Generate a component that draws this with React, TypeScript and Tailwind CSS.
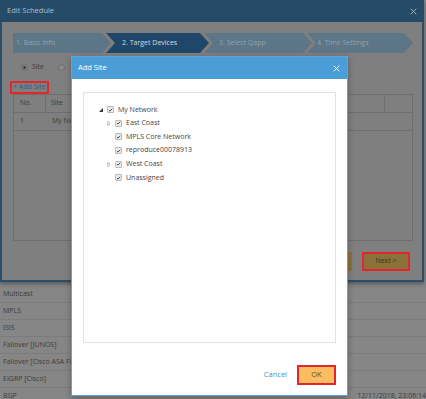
import * as React from "react";

const PAGE_ROWS = [
  "Multicast",
  "MPLS",
  "ISIS",
  "Failover [JUNOS]",
  "Failover [Cisco ASA Firewall]",
  "EIGRP [Cisco]",
  "BGP",
];

const STEPS = [
  { label: "1. Basic Info", cls: "w-[98px] pl-[3px] bg-[#5c7687] text-[#8fa3b0] [clip-path:polygon(0_0,calc(100%-9px)_0,100%_50%,calc(100%-9px)_100%,0_100%)]" },
  { label: "2. Target Devices", cls: "-ml-[5px] w-[103px] pl-[16px] bg-[#1f476a] text-[#d3dce4] [clip-path:polygon(0_0,calc(100%-9px)_0,100%_50%,calc(100%-9px)_100%,0_100%,9px_50%)]" },
  { label: "3. Select Qapp", cls: "-ml-[5px] w-[108px] pl-[15px] bg-[#5c7687] text-[#8fa3b0] [clip-path:polygon(0_0,calc(100%-9px)_0,100%_50%,calc(100%-9px)_100%,0_100%,9px_50%)]" },
  { label: "4. Time Settings", cls: "-ml-[5px] w-[106px] pl-[10px] bg-[#5c7687] text-[#8fa3b0] [clip-path:polygon(0_0,calc(100%-9px)_0,100%_50%,calc(100%-9px)_100%,0_100%,9px_50%)]" },
];

const TREE = [
  { label: "My Network", level: 0, toggle: "open" },
  { label: "East Coast", level: 1, toggle: "closed" },
  { label: "MPLS Core Network", level: 1, toggle: null },
  { label: "reproduce00078913", level: 1, toggle: null },
  { label: "West Coast", level: 1, toggle: "closed" },
  { label: "Unassigned", level: 1, toggle: null },
];

function Check() {
  return (
    <span className="flex size-[7px] shrink-0 items-center justify-center rounded-[1px] border border-[#b9b9b9] bg-[#ececec]">
      <svg viewBox="0 0 8 8" className="size-[6px]" aria-hidden>
        <path d="M1.5 4.2 3.2 5.8 6.5 2" fill="none" stroke="#333" strokeWidth="1.4" />
      </svg>
    </span>
  );
}

function Toggle({ kind }: { kind: string | null }) {
  return (
    <span className="flex w-[8px] shrink-0 items-center">
      {kind === "open" && (
        <svg viewBox="0 0 4 4" className="size-[4px]" aria-hidden>
          <path d="M4 0V4H0z" fill="#333" />
        </svg>
      )}
      {kind === "closed" && (
        <svg viewBox="0 0 4 6" className="h-[5px] w-[4px]" aria-hidden>
          <path d="M0.5 0.5 3.5 3 0.5 5.5z" fill="none" stroke="#999" strokeWidth="0.8" />
        </svg>
      )}
    </span>
  );
}

export default function App() {
  return (
    <div className="relative h-[399px] w-[426px] overflow-hidden bg-[#868686] font-['Open_Sans',sans-serif] text-[7px] text-[#3b3b3b]">
      {/* Page behind the dialogs */}
      <div className="flex flex-col pt-[286px]">
        {PAGE_ROWS.map((row, i) => (
          <div key={row} className="flex h-[17px] shrink-0 items-center border-b border-[#7c7c7c] pl-[3px]">
            <span className="w-[359px] whitespace-nowrap">{row}</span>
            {i === PAGE_ROWS.length - 1 && <span className="whitespace-nowrap">12/11/2018, 23:06:14</span>}
          </div>
        ))}
      </div>

      {/* Edit Schedule dialog (dimmed) */}
      <div className="absolute left-0 top-0 flex h-[282px] w-[424px] flex-col border-2 border-t-0 border-[#2b4f6b] bg-[#7f7f7f] shadow-[0_2px_4px_rgba(0,0,0,0.35)]">
        <div className="-mx-[2px] flex h-[22px] shrink-0 items-center justify-between bg-[#254b68] pl-[7px] pr-[7px] text-[#aebfcc]">
          <span className="text-[7.5px]">Edit Schedule</span>
          <svg viewBox="0 0 10 10" className="size-[7px]" aria-hidden>
            <path d="M1 1 9 9M9 1 1 9" stroke="#aebfcc" strokeWidth="1.2" />
          </svg>
        </div>

        <div className="flex flex-col px-[11px]">
          {/* Steps */}
          <div className="mt-[11px] flex h-[20px]">
            {STEPS.map((s) => (
              <div key={s.label} className={"flex h-full shrink-0 items-center " + s.cls}>
                <span className="whitespace-nowrap">{s.label}</span>
              </div>
            ))}
          </div>

          {/* Target type */}
          <div className="mt-[8px] flex h-[12px] items-center">
            <span className="ml-[8px] flex size-[7px] items-center justify-center rounded-full border border-[#6a6a6a] bg-[#8a8a8a]">
              <span className="size-[3px] rounded-full bg-[#3a3a3a]" />
            </span>
            <span className="ml-[4px]">Site</span>
            <span className="ml-[14px] size-[7px] rounded-full border border-[#6a6a6a] bg-[#8a8a8a]" />
          </div>

          {/* Add site link */}
          <div className="mt-[8px] flex">
            <span className="-ml-[3px] flex h-[13px] items-center border-2 border-[#e3262b] px-[1px] text-[#2e5d86]">
              + Add Site
            </span>
          </div>

          {/* Sites table */}
          <div className="flex h-[147px] w-[400px] flex-col border border-[#6e6e6e]">
            <div className="flex h-[18px] shrink-0 border-b border-[#6e6e6e]">
              <span className="flex w-[32px] items-center border-r border-[#6e6e6e] pl-[6px]">No.</span>
              <span className="flex w-[339px] items-center border-r border-[#6e6e6e] pl-[5px]">Site</span>
              <span className="flex-1" />
            </div>
            <div className="flex h-[18px] shrink-0 border-b border-[#6e6e6e]">
              <span className="flex w-[32px] items-center pl-[6px]">1</span>
              <span className="flex items-center pl-[6px]">My Network</span>
            </div>
          </div>

          {/* Wizard buttons */}
          <div className="mt-[11px] flex justify-end gap-[10px] pr-[1px]">
            <span className="flex h-[19px] w-[52px] items-center justify-center bg-[#8a7139] text-[#3d3320]">Previous</span>
            <span className="flex h-[19px] w-[48px] items-center justify-center border-2 border-[#e3262b] bg-[#8a7139] text-[#3d3320]">
              Next &gt;
            </span>
          </div>
        </div>
      </div>

      {/* Add Site dialog */}
      <div className="absolute left-[71px] top-[56px] flex h-[340px] w-[277px] flex-col border border-[#5ba6dc] bg-white shadow-[0_2px_6px_rgba(0,0,0,0.3)]">
        <div className="flex h-[22px] shrink-0 items-center justify-between bg-[#4a9dd6] pl-[6px] pr-[7px] text-white">
          <span className="text-[7.5px]">Add Site</span>
          <svg viewBox="0 0 10 10" className="size-[7px]" aria-hidden>
            <path d="M1 1 9 9M9 1 1 9" stroke="#fff" strokeWidth="1.3" />
          </svg>
        </div>

        <div className="mx-[11px] mt-[13px] flex h-[251px] flex-col border border-[#e2e2e2] pl-[15px] pt-[10px] text-[#444]">
          {TREE.map((n) => (
            <div key={n.label} className="flex h-[13.6px] items-center" style={{ paddingLeft: n.level * 8 }}>
              <Toggle kind={n.toggle} />
              <Check />
              <span className="ml-[4px] whitespace-nowrap">{n.label}</span>
            </div>
          ))}
        </div>

        <div className="mt-[22px] flex items-center justify-end gap-[10px] pr-[11px]">
          <span className="text-[7.5px] text-[#4a8fc4]">Cancel</span>
          <span className="flex h-[20px] w-[39px] items-center justify-center border-2 border-[#e3262b] bg-[#fbbd5f] text-[7.5px] text-[#6a4c18]">
            OK
          </span>
        </div>
      </div>
    </div>
  );
}
